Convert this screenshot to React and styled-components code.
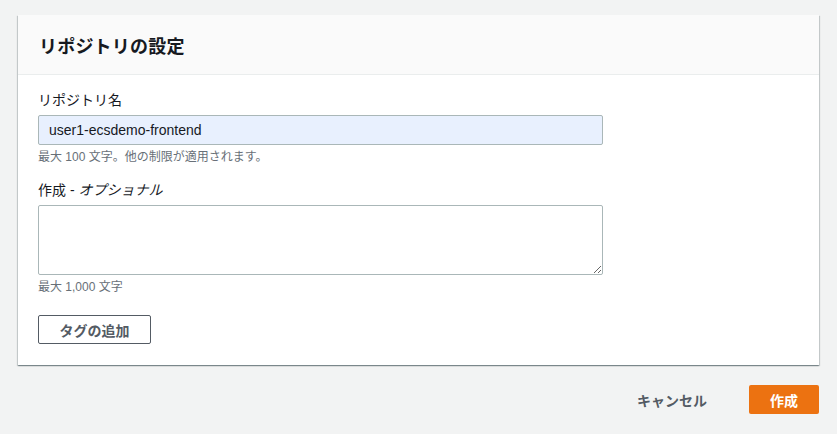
import React from "react";
import styled, { createGlobalStyle } from "styled-components";

const GlobalStyle = createGlobalStyle`
  html, body { margin: 0; padding: 0; background: #f2f3f3; }
  body { font-family: "Liberation Sans", "Noto Sans CJK JP", sans-serif; color: #16191f; }
  * { box-sizing: border-box; }
`;

const Page = styled.div`
  padding: 15px 18px 0 18px;
  width: 837px;
  height: 434px;
`;

const Card = styled.section`
  background: #fff;
  box-shadow: 0 1px 1px 0 rgba(0, 28, 36, 0.3), 1px 1px 1px 0 rgba(0, 28, 36, 0.15), -1px 1px 1px 0 rgba(0, 28, 36, 0.15);
`;

const CardHeader = styled.header`
  background: #fafafa;
  border-bottom: 1px solid #eaeded;
  height: 60px;
  display: flex;
  align-items: center;
  padding: 0 21px;
`;

const Title = styled.h2`
  margin: 0;
  font-size: 18px;
  font-weight: 700;
  color: #16191f;
  letter-spacing: 0.2px;
`;

const CardBody = styled.div`
  padding: 14px 20px 21px 20px;
  display: flex;
  flex-direction: column;
`;

const Field = styled.div`
  display: flex;
  flex-direction: column;
  margin-bottom: ${(p) => p.$mb || 0}px;
`;

const Label = styled.label`
  font-size: 14px;
  line-height: 22px;
  color: #16191f;
  margin-bottom: 4px;
  em { font-style: italic; }
`;

const Input = styled.input`
  width: 565px;
  height: 30px;
  border: 1px solid #aab7b8;
  border-radius: 2px;
  background: #e8f0fe;
  padding: 0 10px;
  font-family: "Liberation Sans", "Noto Sans CJK JP", sans-serif;
  font-size: 14px;
  color: #16191f;
  outline: none;
`;

const TextArea = styled.textarea`
  width: 565px;
  height: 70px;
  border: 1px solid #aab7b8;
  border-radius: 2px;
  background: #fff;
  padding: 4px 10px;
  font-family: "Liberation Sans", "Noto Sans CJK JP", sans-serif;
  font-size: 14px;
  outline: none;
  display: block;
`;

const Hint = styled.div`
  font-size: 12px;
  line-height: 16px;
  color: #687078;
  margin-top: 4px;
`;

const OutlineButton = styled.button`
  align-self: flex-start;
  width: 113px;
  height: 29px;
  border: 1px solid #545b64;
  border-radius: 2px;
  background: #fff;
  color: #545b64;
  font-family: "Liberation Sans", "Noto Sans CJK JP", sans-serif;
  font-size: 14px;
  font-weight: 700;
  cursor: pointer;
`;

const Footer = styled.div`
  display: flex;
  justify-content: flex-end;
  align-items: center;
  gap: 30px;
  margin-top: 20px;
`;

const LinkButton = styled.button`
  border: none;
  background: transparent;
  color: #545b64;
  font-family: "Liberation Sans", "Noto Sans CJK JP", sans-serif;
  font-size: 14px;
  font-weight: 700;
  padding: 0 12px;
  height: 29px;
`;

const PrimaryButton = styled.button`
  width: 70px;
  height: 29px;
  border: none;
  border-radius: 2px;
  background: #ec7211;
  color: #fff;
  font-family: "Liberation Sans", "Noto Sans CJK JP", sans-serif;
  font-size: 14px;
  font-weight: 700;
`;

export default function App() {
  return (
    <>
      <GlobalStyle />
      <Page>
        <Card>
          <CardHeader>
            <Title>リポジトリの設定</Title>
          </CardHeader>
          <CardBody>
            <Field $mb={14}>
              <Label>リポジトリ名</Label>
              <Input defaultValue="user1-ecsdemo-frontend" />
              <Hint>最大 100 文字。他の制限が適用されます。</Hint>
            </Field>
            <Field $mb={20}>
              <Label>
                作成 - <em>オプショナル</em>
              </Label>
              <TextArea />
              <Hint>最大 1,000 文字</Hint>
            </Field>
            <OutlineButton>タグの追加</OutlineButton>
          </CardBody>
        </Card>
        <Footer>
          <LinkButton>キャンセル</LinkButton>
          <PrimaryButton>作成</PrimaryButton>
        </Footer>
      </Page>
    </>
  );
}
